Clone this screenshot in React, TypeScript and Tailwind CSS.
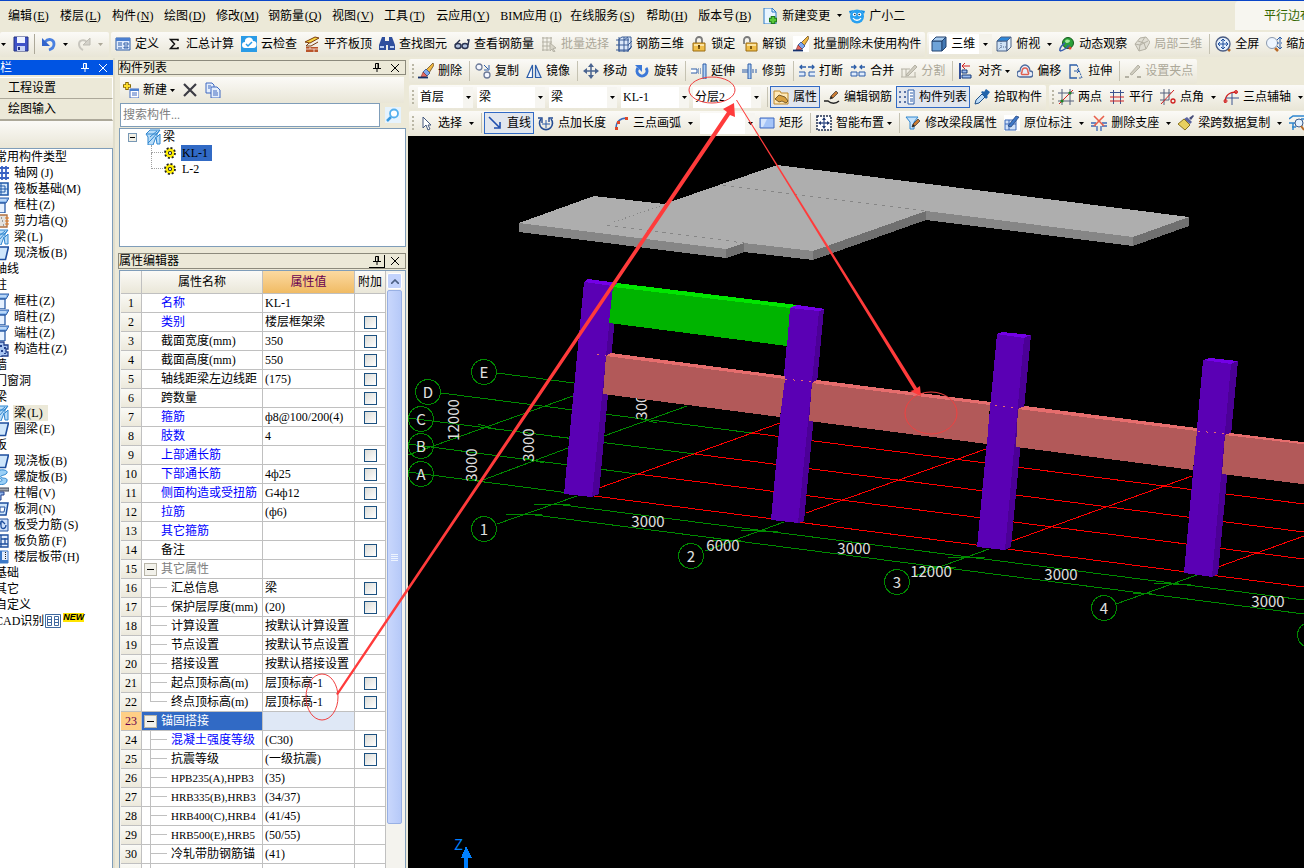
import React, { ReactNode } from "react";

const CHROME_FONT = "font-['Liberation_Serif','Noto_Sans_CJK_SC',sans-serif]";
const STRIP = "flex h-[25px] shrink-0 items-center rounded-[2px] bg-gradient-to-b from-[#fbfaf7] to-[#e9e6d7]";

const B = "#2c5da8";
const R = "#d02020";
const G = "#b4b1a4";

const pencil = (x: number, y: number, c = "#c87a32") => (
  <g>
    <path d={`M${x} ${y + 8}l1-3 5-5 2 2-5 5z`} fill={c} stroke="#333" strokeWidth=".7" />
    <path d={`M${x} ${y + 8}l1-3 2 2z`} fill="#222" />
  </g>
);

const brush = (
  <g>
    <path d="M15 0L8 7l3 3 5-8z" fill="#f0b840" stroke="#5a3c14" strokeWidth=".7" />
    <path d="M8 6l4 4-3 3-4-4z" fill="#7fa8ee" stroke="#1f3f80" strokeWidth=".7" />
    <path d="M5 9l4 4-2 1H3z" fill="#e86a60" stroke="#702020" strokeWidth=".5" />
    <path d="M0 14.500h10" stroke="#16306a" strokeWidth="1.800" />
  </g>
);

const columnShape = (
  <g>
    <path d="M0 1h16l-3 5H0z" fill="#8ebcf0" stroke={B} />
    <path d="M0 6h12v10H0z" fill="#e6f1ff" stroke={B} strokeWidth="1.300" />
    <path d="M0 3h13" stroke="#e6f1ff" />
  </g>
);
const beamShape = (
  <g>
    <path d="M1 5l4-4h10l-3 4v3l3-3v10h-3l-1-7-3 8H3V8z" fill="#b8dcf8" stroke="#2f86cf" />
    <path d="M2 5h10M5 8l7-6M6 11l8-9M3 14l3-3" stroke="#2f86cf" fill="none" />
  </g>
);

const ICONS: Record<string, ReactNode> = {
  save: (
    <g>
      <path d="M1 1h14v14H1z" fill="#3f52c8" stroke="#22307e" />
      <path d="M4 1h8v6H4z" fill="#eef2ff" />
      <path d="M4 10h8v5H4z" fill="#c9d3f5" />
      <path d="M5 11h2v3H5z" fill="#22307e" />
    </g>
  ),
  undo: (
    <g>
      <path d="M4 6c3-4 9-3 9 2 0 3-2 5-5 6" stroke="#4a80e0" strokeWidth="2.800" fill="none" />
      <path d="M1 2v8h8z" fill="#3264cc" />
    </g>
  ),
  redo: (
    <g>
      <path d="M11 6C8 3 3 4 3 8c0 3 2 5 4 6" stroke="#c8c6be" strokeWidth="2" fill="none" />
      <path d="M14 2v7H7z" fill="#d4d2ca" stroke="#bdbbb2" />
    </g>
  ),
  define: (
    <g>
      <path d="M1 2h14v12H1z" fill="#dfeafc" stroke={B} />
      <path d="M1 2h14v3H1z" fill="#4b7fd0" />
      <path d="M3 7h4M3 9h4M3 12h4" stroke={B} />
      <path d="M9 7h4v2H9zM9 11h4v1H9z" fill="#fff" stroke={B} />
    </g>
  ),
  sigma: <path d="M12 5V3.500H4.500L8.500 8l-4 4.500H12V11" stroke="#111" strokeWidth="1.500" fill="none" />,
  cloudCheck: (
    <g>
      <path d="M0 0h16v16H0z" fill="#2a9be6" />
      <path d="M4 12a3 3 0 010-6 4 4 0 018-1 3.500 3.500 0 010 7z" fill="#fff" />
      <path d="M5 8l2 2 4-4" stroke="#2a9be6" strokeWidth="1.500" fill="none" />
    </g>
  ),
  slabTop: (
    <g>
      <path d="M1 6l10-5 4 1-9 5z" fill="#f6d23c" stroke="#7a3b10" />
      <path d="M5 7l-3 3h5l7-4" stroke="#7a3b10" fill="none" />
      <path d="M2 11h12v5H2z" fill="#b9542a" />
      <path d="M2 13h12M6 11v2M10 13v3" stroke="#fff" strokeWidth=".7" />
    </g>
  ),
  binoculars: (
    <g fill="#2f4f9e">
      <path d="M3 1h3v4l1 1v8H0V9zM13 1h-3v4L9 6v8h7V9z" />
      <path d="M6 5h4v4H6z" />
      <path d="M1 10h4v2H1zM11 10h4v2h-4z" fill="#b9cdf4" />
    </g>
  ),
  glasses: (
    <g fill="none" stroke="#2a3350" strokeWidth="1.400">
      <ellipse cx="4" cy="10" rx="3" ry="2.500" fill="#b4c4e0" />
      <ellipse cx="11" cy="10" rx="3" ry="2.500" fill="#b4c4e0" />
      <path d="M1 9l5-5M14 9l1-5h-2" />
    </g>
  ),
  batchSelect: (
    <g stroke={G} fill="none">
      <path d="M1 2h10M1 6h10M1 10h8M1 14h7M2 1v14M6 1v14M10 1v7" />
      <path d="M9 7l6 5-3 .5 2 3-1.500.5-1.500-3-2 2z" fill="#d8d5c8" />
    </g>
  ),
  rebar3d: (
    <g stroke="#3a5c96" fill="none">
      <path d="M3 3l3-2h9v11l-3 3H3z" fill="#dbe8fa" />
      <path d="M0 4h13M0 9h13M0 14h13M3 1v15M8 1v15M12 2v14M12 9l4-4M12 14l4-4M8 4l4-3" />
    </g>
  ),
  lock: (
    <g>
      <path d="M5 7V4a3 3 0 016 0v3" stroke="#7b7b7b" strokeWidth="1.800" fill="none" />
      <path d="M2 7h12v8H2z" fill="#f0bf4a" stroke="#9a6a10" />
      <path d="M3 8h10v2H3z" fill="#fbe3a0" />
      <path d="M8 9v4M7 10h2" stroke="#5a3a00" strokeWidth="1.500" />
    </g>
  ),
  unlock: (
    <g>
      <path d="M2 8V4a3 3 0 016 0v2" stroke="#7b7b7b" strokeWidth="1.800" fill="none" />
      <path d="M4 7h11v8H4z" fill="#f0bf4a" stroke="#9a6a10" />
      <path d="M5 8h9v2H5z" fill="#fbe3a0" />
      <path d="M9 10v3" stroke="#5a3a00" strokeWidth="1.500" />
    </g>
  ),
  brush,
  brushWhite: (
    <g>
      <path d="M0 0h16v16H0z" fill="#fff" />
      {brush}
    </g>
  ),
  cube: (
    <g stroke="#23436e">
      <path d="M1 5h10v10H1z" fill="#6ea3d8" />
      <path d="M1 5l4-4h10l-4 4z" fill="#a9cdf0" />
      <path d="M11 5l4-4v10l-4 4z" fill="#4278b4" />
    </g>
  ),
  cubeTop: (
    <g stroke="#4a6288">
      <path d="M1 5h10v10H1z" fill="#cfe2f6" />
      <path d="M1 5l4-4h10l-4 4z" fill="#2f87d8" />
      <path d="M11 5l4-4v10l-4 4z" fill="#e8f2fc" />
      <path d="M5 5v6l-4 4M5 11h6" fill="none" strokeDasharray="1 1" />
    </g>
  ),
  orbit: (
    <g>
      <circle cx="9" cy="7" r="5.500" fill="#2aa038" stroke="#125a1c" />
      <path d="M6 5c2-3 5-1 5 0S7 9 6 5z" fill="#a5e8a0" />
      <path d="M1 15C0 12 4 8 6 7M1 15c3 0 8-4 9-6" fill="none" stroke="#3b5fae" strokeWidth="1.500" />
      <circle cx="11" cy="12" r="1.500" fill="#e04030" />
    </g>
  ),
  localCube: (
    <g stroke={G} fill="#e0ded4">
      <path d="M1 8l5-6 6-1 4 5-4 7-7 2z" />
      <path d="M1 8l5 1 5-8M6 9l-1 6M6 9l8-4M4 5l6 2 2 6" fill="none" />
    </g>
  ),
  fullScreen: (
    <g>
      <path d="M12 12l3 3" stroke="#b86a28" strokeWidth="2.500" />
      <circle cx="8" cy="8" r="7" fill="#e4effc" stroke="#4a5c84" strokeWidth="1.300" />
      <path d="M8 3v10M3 8h10M6 5l2-2 2 2M6 11l2 2 2-2M5 6L3 8l2 2M11 6l2 2-2 2" stroke="#1f4f9e" fill="none" />
    </g>
  ),
  zoomIcon: (
    <g>
      <path d="M9 12l3 3" stroke="#b86a28" strokeWidth="2.500" />
      <circle cx="6" cy="7" r="5.500" fill="#edf5ff" stroke="#8b99ae" />
      <path d="M11 4l3-3 2 2M11 10l3 3 2-2M14 1v5M14 8v5M11 7h5" stroke={B} fill="none" />
    </g>
  ),
  newChange: (
    <g>
      <path d="M2 0h8l4 4v12H2z" fill="#e8f5ff" stroke="#2a7ac8" />
      <path d="M10 0v4h4" fill="none" stroke="#2a7ac8" />
      <path d="M11 8v8M7 12h8" stroke="#1e7a1e" strokeWidth="4.500" />
      <path d="M11 9v6M8 12h6" stroke="#58c83a" strokeWidth="2.500" />
    </g>
  ),
  mascot: (
    <g>
      <path d="M1 6L0 3l5-1zM15 6l1-3-5-1z" fill="#128ee6" />
      <circle cx="8" cy="8.500" r="7" fill="#28a0f0" />
      <circle cx="5.500" cy="6.500" r="1.800" fill="#fff" />
      <circle cx="10.500" cy="6.500" r="1.800" fill="#fff" />
      <circle cx="5.800" cy="6.500" r=".8" fill="#123" />
      <circle cx="10.200" cy="6.500" r=".8" fill="#123" />
      <path d="M4 10c2 3 6 3 8 0" stroke="#fff" fill="none" strokeWidth="1.300" />
    </g>
  ),
  copy: (
    <g>
      <circle cx="4" cy="4" r="3" fill="#f4f7ff" stroke="#6c7a98" strokeWidth="1.300" />
      <circle cx="12" cy="12" r="3" fill="#f4f7ff" stroke="#6c7a98" strokeWidth="1.300" />
      <path d="M9 2l4 4M14 2v5H9" stroke={B} fill="none" />
    </g>
  ),
  mirror: (
    <g stroke={B} fill="#fff" strokeWidth="1.200">
      <path d="M6.500 2v12.500H1z" />
      <path d="M9.500 2v12.500H15z" fill="#cfe0f8" />
    </g>
  ),
  move: (
    <g>
      <path d="M8 2v12M2 8h12" stroke="#4a6490" strokeWidth="1.500" />
      <path d="M5 4l3-4 3 4zM5 12l3 4 3-4zM4 5L0 8l4 3zM12 5l4 3-4 3z" fill="#4a6490" />
    </g>
  ),
  rotate: (
    <g>
      <path d="M4 5a5 5 0 108 0" stroke="#3b78d8" strokeWidth="3" fill="none" />
      <path d="M1 2h7v7z" fill="#3b78d8" />
    </g>
  ),
  extend: (
    <g>
      <path d="M0 6h6v4H0" fill="#fff" stroke={B} />
      <path d="M7 6h4M7 8h4M7 10h4" stroke={B} strokeDasharray="1 1" />
      <path d="M12 1h3v15h-3z" fill="#b0d0f4" stroke={B} />
    </g>
  ),
  trim: (
    <g>
      <path d="M0 7h6M0 9h6" stroke={B} />
      <path d="M10 7h6M10 9h6" stroke={B} strokeDasharray="2 1" />
      <path d="M6 1h3v15H6z" fill="#b0d0f4" stroke={B} />
    </g>
  ),
  breakIcon: (
    <g>
      <path d="M7 4H1M3 2L1 4l2 2M9 4h6M13 2l2 2-2 2" stroke={B} fill="none" strokeWidth="1.300" />
      <path d="M0 9h6v4H0M16 9h-6v4h6" fill="#e0ecfc" stroke={B} />
    </g>
  ),
  merge: (
    <g>
      <path d="M1 4h5M4 2l2 2-2 2M15 4h-5M12 2l-2 2 2 2" stroke={B} fill="none" strokeWidth="1.300" />
      <path d="M1 9h6v4H1zM9 9h6v4H9z" fill="#e0ecfc" stroke={B} />
    </g>
  ),
  split: (
    <g stroke={G} fill="none">
      <path d="M0 6h9M0 14h15M1 6v8M14 9v5M5 6v8" />
      <path d="M5 12l9-10 2 2-9 9z" fill="#cfccbf" />
    </g>
  ),
  align: (
    <g>
      <path d="M2 0v16" stroke="#1f3f90" strokeWidth="1.800" />
      <path d="M4 7h5v3H4zM4 12h9v3H4z" fill="#9cbcf0" stroke="#173a7a" />
      <path d="M12 3H4M7 0L4 3l3 3" stroke={R} fill="none" />
    </g>
  ),
  offset: (
    <g fill="none">
      <path d="M3 14a3 3 0 010-6c0-4 3-6 5-6s5 2 5 6a3 3 0 010 6z" stroke="#4c6a9c" fill="#e8eefa" strokeWidth="1.300" />
      <path d="M5 11.500a1.500 1.500 0 010-2.500c0-2 1-4 3-4s3 2 3 4a1.500 1.500 0 010 2.500z" stroke="#e06050" strokeWidth="1.500" />
    </g>
  ),
  stretch: (
    <g fill="none" stroke={B}>
      <path d="M9 2H2v13h7" strokeWidth="1.300" />
      <path d="M9 2l5 13h-4" strokeDasharray="2 1" />
      <path d="M6 8h5M9 6l2 2-2 2" />
    </g>
  ),
  grip: (
    <g fill="none" stroke={G}>
      <path d="M0 14h4M12 14h4" strokeWidth="2" />
      <path d="M5 11l8-9 2 2-8 8z" fill="#cfccbf" />
    </g>
  ),
  props: (
    <g>
      <path d="M1 2h6l1 2h7v11H1z" fill="#ffe9b8" stroke="#c08a2c" />
      <path d="M2 10l4-4 6 2 3 4-2 2-4-2-3 1z" fill="#d8a040" stroke="#59421a" strokeWidth=".8" />
    </g>
  ),
  editRebar: (
    <g>
      <path d="M0 12h4c3 3 8 3 11 0" stroke="#222" fill="none" strokeWidth="1.400" />
      {pencil(6, 2)}
    </g>
  ),
  compList: (
    <g>
      <path d="M0 3h3M5 3h3M0 8h3M5 8h3M0 13h3M5 13h3" stroke="#2f4f90" strokeWidth="1.600" strokeDasharray="2 1" />
      <path d="M9 1h6v14H9z" fill="#fff" stroke={B} />
      <path d="M11 4h3M11 7h3M11 10h3M11 12h3" stroke={B} />
    </g>
  ),
  picker: (
    <g>
      <path d="M1 15l1-4 6-6 3 3-6 6z" fill="#bcdcf8" stroke="#1f4f88" />
      <path d="M7 3l2-1 1 1 2-3 4 3-3 4 1 1-2 2z" fill="#2064ac" />
    </g>
  ),
  twoPoints: (
    <g>
      <path d="M0 4h16M0 12h16M4 0v16M12 0v16" stroke="#54607c" />
      <path d="M1 15L15 1" stroke={R} />
      <circle cx="4" cy="12" r="1.600" fill="#208020" />
      <circle cx="12" cy="4" r="1.600" fill="#208020" />
    </g>
  ),
  parallel: (
    <g>
      <path d="M4.500 1v14M11.500 1v14M1 3.500h14" stroke="#3c5490" />
      <path d="M1 8h14M1 12h14" stroke={R} />
    </g>
  ),
  pointAngle: (
    <g>
      <path d="M0 4h11M0 11h9M4 0v16M9 0v11" stroke="#54607c" />
      <path d="M1 15L14 1" stroke={R} />
      <circle cx="13" cy="12" r="2" fill="none" stroke={R} strokeWidth="1.300" />
    </g>
  ),
  threeAxis: (
    <g fill="none">
      <path d="M2 14C2 6 6 3 14 3" stroke={R} strokeWidth="1.300" />
      <path d="M3 9h13M9 4v12" stroke="#3c5490" />
      <circle cx="2.500" cy="12" r="1.500" stroke={R} />
      <circle cx="13" cy="3" r="1.500" stroke={R} />
    </g>
  ),
  cursor: <path d="M5 2v11l3-3 2 5 2-1-2-4h3z" fill="#fff" stroke="#44597e" />,
  line: <path d="M2 2l10 10M13 7v6H7" stroke="#1f4fae" strokeWidth="1.600" fill="none" />,
  pointLen: (
    <g fill="none">
      <path d="M3 4a6.500 6.500 0 1010 0" stroke="#244c94" strokeWidth="1.600" />
      <path d="M0 3h4v5M15 3h-4v4" stroke="#244c94" strokeWidth="1.400" />
      <path d="M8 5v8M4 9h8" stroke={B} />
    </g>
  ),
  arc3: (
    <g>
      <path d="M3 14C3 7 7 3 14 3" stroke="#3a68b8" fill="none" strokeWidth="1.500" />
      <path d="M2 12h3v3H2zM4 6h3v3H4zM12 2h3v3h-3z" fill="#e04828" />
    </g>
  ),
  rect: (
    <g>
      <path d="M1 3h14v10H1z" fill="#a4c4f8" stroke="#3f69c0" />
      <path d="M2 4h6L4 12H2z" fill="#d4e4fc" />
    </g>
  ),
  smart: (
    <g>
      <path d="M1 1h14v14H1z" fill="#fff" stroke="#1f2f50" strokeDasharray="2 1" strokeWidth="1.500" />
      <path d="M8 3v10M3 8h10" stroke="#3f5890" strokeWidth="1.300" />
      <path d="M6 5l2-3 2 3zM6 11l2 3 2-3zM5 6L2 8l3 2zM11 6l3 2-3 2z" fill="#1f3870" />
    </g>
  ),
  editSeg: (
    <g>
      <path d="M1 2h12l-4 5v7H5V7z" fill="#c4e2fb" stroke="#2f86cf" />
      {pencil(7, 4)}
    </g>
  ),
  inPlace: (
    <g>
      <path d="M0 0h16v16H0z" fill="#fff" />
      <path d="M1 5h11v10H1zM1 9h11M5 5v10" fill="#cfe0f8" stroke="#3a68b8" />
      <path d="M4 11l8-10 3 1-8 10z" fill="#3f78c8" stroke="#1c3c70" strokeWidth=".7" />
    </g>
  ),
  delSupport: (
    <g>
      <path d="M0 8h5M11 8h5M0 11h5M11 11h5M6 11v5M10 11v5" stroke="#3a68b8" strokeWidth="1.300" />
      <path d="M3 1l10 10M13 1L3 11" stroke="#e8604c" strokeWidth="1.600" />
    </g>
  ),
  copyBrush: (
    <g>
      <path d="M15 0l-4 3 2 2 3-4z" fill="#444c78" />
      <path d="M9 2l5 5-2 2-6-5z" fill="#5a64a0" />
      <path d="M6 4l6 6-5 5-7-6z" fill="#e8d060" stroke="#8a7420" />
    </g>
  ),
  beamFind: (
    <g>
      <path d="M0 4l4-3h11M0 8h6M3 12h4M12 4h4M4 8v7" stroke="#2f86cf" fill="none" strokeWidth="1.500" />
      <circle cx="10" cy="8" r="4" fill="#e4f2ff" stroke="#3c5c8c" />
      <path d="M12 11l3 4" stroke="#b86a28" strokeWidth="2" />
    </g>
  ),
  addNew: (
    <g>
      <path d="M4 0v8M0 4h8" stroke="#8a6a00" strokeWidth="3.500" />
      <path d="M4 1v6M1 4h6" stroke="#ffe030" strokeWidth="1.800" />
      <path d="M7 7h9v9H7z" fill="#fff" stroke="#3f69c0" />
      <path d="M7 7h9v2H7z" fill="#4b7fd0" />
      <path d="M9 11h5M9 13h5" stroke="#3f69c0" />
    </g>
  ),
  closeBig: <path d="M2 2l12 12M14 2L2 14" stroke="#3c3c44" strokeWidth="2.200" />,
  pages: (
    <g stroke="#3f69c0">
      <path d="M1 1h6l2 2v8H1z" fill="#e4eefc" />
      <path d="M6 5h6l3 3v8H6z" fill="#e4eefc" />
      <path d="M8 9h4M8 11h5M8 13h5M3 4h3M3 6h2" />
    </g>
  ),
  search: (
    <g>
      <path d="M0 0h16v16H0z" fill="#e6f3fd" />
      <path d="M6 10l-4 4" stroke="#3a9ae0" strokeWidth="2.500" />
      <circle cx="9" cy="6.500" r="4" fill="#fff" stroke="#55b0ee" strokeWidth="1.800" />
    </g>
  ),
  beam: beamShape,
  gear: (
    <g>
      <circle cx="8" cy="8" r="5.500" fill="#ffee00" stroke="#222" strokeWidth="2.500" strokeDasharray="2.200 2.100" />
      <circle cx="8" cy="8" r="4.500" fill="#ffee00" />
      <circle cx="8" cy="8" r="1.800" fill="#fff" stroke="#222" strokeWidth="1.200" />
    </g>
  ),
  axisGrid: <path d="M0 3h16M0 8h16M0 13h16M4 1v14M9 1v14M13 1v14" stroke="#3a63c4" strokeWidth="1.800" />,
  raft: (
    <g fill="none" stroke="#1f58a8">
      <path d="M0 2h15v12H0z" fill="#d4e8fb" strokeWidth="1.600" />
      <path d="M4 5h8v6H4zM8 2v12M0 8h15" />
    </g>
  ),
  column: columnShape,
  wall: (
    <g>
      <path d="M0 2h14v12H0z" fill="#e4e2de" stroke="#b07040" strokeWidth="1.400" />
      <path d="M12 5h4M12 8h4M12 11h4" stroke="#e07820" strokeWidth="1.200" />
      <path d="M8 5h1M9 8h1M6 11h1M10 12h1" stroke="#555" />
    </g>
  ),
  slab: <path d="M0 2h15.500l-3 12.500H0z" fill="#cfe6fb" stroke="#1f4f9e" strokeWidth="1.600" />,
  builtCol: (
    <g>
      <path d="M3 1h8v3h4v4h-2v3h2v4H9v1H3z" fill="#a8c4f0" stroke="#22408c" strokeWidth="1.300" />
      <path d="M7 4h2v2H7zM11 6h2v2h-2zM8 9h2v2H8zM11 12h2v1h-2z" fill="#22408c" />
    </g>
  ),
  spiral: <path d="M7 1c6-1 9 2 6 4s-6 1-5 3 7 0 6 4-6 4-10 3l1-3c4 1 5-1 3-2s-5-3-3-6z" fill="#9cd0f6" stroke="#2f86cf" />,
  colCap: (
    <g>
      <path d="M0 3h16v3H0z" fill="#a4a8b0" stroke="#3c4454" />
      <path d="M0 7h11v3H8v5H4v-5H0z" fill="#8fb4ea" stroke="#22408c" />
    </g>
  ),
  hole: (
    <g fill="none">
      <path d="M0 2h15l-2 12H0z" fill="#cfe6fb" stroke="#1f4f9e" strokeWidth="1.500" />
      <path d="M7 6h5l-1 5H7z" stroke="#1f4f9e" fill="#fff" />
    </g>
  ),
  slabRebar: (
    <g fill="none" stroke="#1f4f9e">
      <path d="M0 2h15v12H0z" fill="#cfe0fb" />
      <path d="M8 4v5c0 4 5 3 5-1M6 8l3-4 3 3" strokeWidth="1.300" />
    </g>
  ),
  negRebar: (
    <g fill="none" stroke="#1f4f9e">
      <path d="M0 2h15v12H0zM8 2v12M12 5v6M8 6h7M0 11h15" fill="#e4eefc" strokeWidth="1.300" />
    </g>
  ),
  band: (
    <g>
      <path d="M0 2h15v12H0z" fill="#e4eefc" stroke="#3a78c8" />
      <path d="M0 11h15v3H0z" fill="#3a78c8" />
      <path d="M7 2v10h2V2z" fill="#3a78c8" />
      <path d="M12.500 3v8" stroke="#222" strokeDasharray="1 1" />
    </g>
  ),
};

function Icon({ name, className = "size-4" }: { name: string; className?: string }) {
  return (
    <svg viewBox="0 0 16 16" className={`shrink-0 ${className}`} aria-hidden="true">
      {ICONS[name]}
    </svg>
  );
}

function Caret({ dim = false }: { dim?: boolean }) {
  return (
    <svg viewBox="0 0 5 3" className="h-[3px] w-[5px] shrink-0" aria-hidden="true">
      <path d="M0 0h5L2.500 3z" fill={dim ? "#aca899" : "#000"} />
    </svg>
  );
}

const Sep = () => <span className="mr-[5px] h-5 w-px shrink-0 bg-[#c5c2b2]" />;

const Grip = () => (
  <span className="mr-1 ml-[3px] flex shrink-0 flex-col gap-[2px]">
    {[0, 1, 2, 3].map((i) => (
      <span key={i} className="size-[2px] bg-[#bab7a6]" />
    ))}
  </span>
);

type ToolProps = { icon: string; label?: string; drop?: "split" | "tight"; off?: boolean; on?: boolean };

function Tool({ icon, label, drop, off, on }: ToolProps) {
  return (
    <button
      type="button"
      disabled={off}
      aria-label={label ?? icon}
      className={`flex shrink-0 items-center whitespace-nowrap last:mr-1 ${off ? "text-[#aca899]" : "text-black"} ${
        on ? "mr-1 -ml-[3px] h-[22px] border border-[#316ac5] bg-[#e1e6ee] px-[2px]" : "mr-[7px] h-[22px]"
      }`}
    >
      <Icon name={icon} className="mr-1 size-4" />
      {label}
      {drop && (
        <span className={`flex justify-end ${drop === "split" ? "w-3" : "w-2"}`}>
          <Caret />
        </span>
      )}
    </button>
  );
}

function Combo({ value, label, width = "w-[68px]" }: { value: string; label: string; width?: string }) {
  return (
    <div className={`mr-1 flex h-[21px] shrink-0 items-center bg-[#f6f5f0] ${width}`}>
      <select aria-label={label} className="h-full min-w-0 flex-1 appearance-none bg-white pl-[2px] text-black outline-none">
        <option>{value}</option>
      </select>
      <span className="flex w-[10px] justify-center">
        <Caret />
      </span>
    </div>
  );
}

const MENUS: [string, string][] = [
  ["编辑", "E"],
  ["楼层", "L"],
  ["构件", "N"],
  ["绘图", "D"],
  ["修改", "M"],
  ["钢筋量", "Q"],
  ["视图", "V"],
  ["工具", "T"],
  ["云应用", "Y"],
  ["BIM应用", "I"],
  ["在线服务", "S"],
  ["帮助", "H"],
  ["版本号", "B"],
];

function MenuBar() {
  return (
    <nav className="flex h-[30px] shrink-0 items-center overflow-hidden border-t border-[#0a46c8] pl-2">
      {MENUS.map(([t, k]) => (
        <button type="button" key={k} className={`mr-[10px] flex shrink-0 whitespace-nowrap ${k === "I" ? "w-[60px]" : ""}`}>
          {t}
          <span className="w-[18px] shrink-0 text-center">
            (<u>{k}</u>)
          </span>
        </button>
      ))}
      <Tool icon="newChange" label="新建变更" drop="split" />
      <Tool icon="mascot" label="广小二" />
      <button type="button" className="ml-auto h-full w-[69px] shrink-0 overflow-hidden rounded-tl bg-[#f7f6f0] pl-[29px] text-left whitespace-nowrap text-[#336600]">
        平行边布
      </button>
    </nav>
  );
}

function MainToolbar() {
  return (
    <div className="flex h-[28px] shrink-0 items-center gap-[2px] overflow-hidden">
      <div className={`${STRIP} w-[109px]`}>
        <span className="mr-[7px] ml-px">
          <Caret />
        </span>
        <button type="button" aria-label="保存">
          <Icon name="save" />
        </button>
        <span className="mr-[6px] ml-[5px] h-5 w-px bg-[#aca899]" />
        <button type="button" aria-label="撤销" className="flex items-center gap-[6px]">
          <Icon name="undo" />
          <Caret />
        </button>
        <button type="button" aria-label="恢复" disabled className="ml-2 flex items-center gap-[6px]">
          <Icon name="redo" />
          <Caret dim />
        </button>
      </div>
      <div className={`${STRIP} pl-1`}>
        <Tool icon="define" label="定义" />
        <Tool icon="sigma" label="汇总计算" />
        <Tool icon="cloudCheck" label="云检查" />
        <Tool icon="slabTop" label="平齐板顶" />
        <Tool icon="binoculars" label="查找图元" />
        <Tool icon="glasses" label="查看钢筋量" />
        <Tool icon="batchSelect" label="批量选择" off />
        <Tool icon="rebar3d" label="钢筋三维" />
        <Tool icon="lock" label="锁定" />
        <Tool icon="unlock" label="解锁" />
        <Tool icon="brushWhite" label="批量删除未使用构件" />
      </div>
      <div className={`${STRIP} flex-1 pl-[2px]`}>
        <button type="button" className="mr-1 flex h-5 shrink-0 items-center bg-white pl-[2px] whitespace-nowrap">
          <Icon name="cube" className="mr-1 size-4" />
          三维
          <span className="ml-1 flex h-full w-[13px] items-center justify-center bg-[#f4f2ea]">
            <Caret />
          </span>
        </button>
        <Tool icon="cubeTop" label="俯视" drop="split" />
        <Tool icon="orbit" label="动态观察" />
        <Tool icon="localCube" label="局部三维" off />
        <Sep />
        <Tool icon="fullScreen" label="全屏" />
        <Tool icon="zoomIcon" label="缩放" />
      </div>
    </div>
  );
}

function DrawToolbars() {
  return (
    <div className="shrink-0 overflow-hidden pl-px">
      <div className="flex h-[26px] items-center">
        <div className={STRIP}>
          <Grip />
          <Tool icon="brush" label="删除" />
          <Sep />
          <Tool icon="copy" label="复制" />
          <Tool icon="mirror" label="镜像" />
          <Sep />
          <Tool icon="move" label="移动" />
          <Tool icon="rotate" label="旋转" />
          <Sep />
          <Tool icon="extend" label="延伸" />
          <Tool icon="trim" label="修剪" />
          <Sep />
          <Tool icon="breakIcon" label="打断" />
          <Tool icon="merge" label="合并" />
          <Tool icon="split" label="分割" off />
          <Sep />
          <Tool icon="align" label="对齐" drop="tight" />
          <Tool icon="offset" label="偏移" />
          <Tool icon="stretch" label="拉伸" />
          <Sep />
          <Tool icon="grip" label="设置夹点" off />
        </div>
      </div>
      <div className="flex h-[26px] items-center gap-[3px]">
        <div className={STRIP}>
          <Grip />
          <Combo value="首层" label="楼层" width="w-[55px]" />
          <Combo value="梁" label="构件类型" />
          <Combo value="梁" label="构件子类型" />
          <Combo value="KL-1" label="构件" />
          <Combo value="分层2" label="分层" />
          <span className="w-[2px]" />
          <Sep />
          <Tool icon="props" label="属性" on />
          <Tool icon="editRebar" label="编辑钢筋" />
          <Tool icon="compList" label="构件列表" on />
          <Tool icon="picker" label="拾取构件" />
        </div>
        <div className={`${STRIP} flex-1`}>
          <Grip />
          <Tool icon="twoPoints" label="两点" />
          <Tool icon="parallel" label="平行" />
          <Tool icon="pointAngle" label="点角" drop="split" />
          <Tool icon="threeAxis" label="三点辅轴" drop="split" />
        </div>
      </div>
      <div className="flex h-[26px] items-center">
        <div className={`${STRIP} flex-1`}>
          <Grip />
          <Tool icon="cursor" label="选择" drop="split" />
          <Sep />
          <Tool icon="line" label="直线" on />
          <Tool icon="pointLen" label="点加长度" />
          <Tool icon="arc3" label="三点画弧" drop="split" />
          <Combo value="" label="画弧方式" width="w-[55px]" />
          <Tool icon="rect" label="矩形" />
          <Sep />
          <Tool icon="smart" label="智能布置" drop="tight" />
          <Sep />
          <Tool icon="editSeg" label="修改梁段属性" />
          <Tool icon="inPlace" label="原位标注" drop="split" />
          <Tool icon="delSupport" label="删除支座" drop="split" />
          <Tool icon="copyBrush" label="梁跨数据复制" drop="split" />
          <Tool icon="beamFind" />
        </div>
      </div>
    </div>
  );
}

function PinClose({ light = false, raised = false }: { light?: boolean; raised?: boolean }) {
  const c = light ? "#fff" : "#000";
  return (
    <span className="ml-auto flex items-center gap-1 pr-1">
      <button type="button" aria-label="固定" className={`flex h-[13px] w-4 items-center justify-center ${raised ? "border-r border-b border-black" : ""}`}>
        <svg viewBox="0 0 8 9" className="h-[9px] w-2" fill="none" stroke={c}>
          <path d="M2.500 5V.5h3V5M5 0v5M0 5.500h8M4 6v3" />
        </svg>
      </button>
      <button type="button" aria-label="关闭" className="flex size-3 items-center justify-center">
        <svg viewBox="0 0 8 8" className="size-2" stroke={c}>
          <path d="M0 0l8 8M8 0L0 8" />
        </svg>
      </button>
    </span>
  );
}

type Nav = { t: string; k?: string; icon?: string; on?: boolean; tag?: boolean };
const NAV: Nav[] = [
  { t: "常用构件类型" },
  { t: "轴网", k: "J", icon: "axisGrid" },
  { t: "筏板基础", k: "M", icon: "raft" },
  { t: "框柱", k: "Z", icon: "column" },
  { t: "剪力墙", k: "Q", icon: "wall" },
  { t: "梁", k: "L", icon: "beam" },
  { t: "现浇板", k: "B", icon: "slab" },
  { t: "轴线" },
  { t: "柱" },
  { t: "框柱", k: "Z", icon: "column" },
  { t: "暗柱", k: "Z", icon: "column" },
  { t: "端柱", k: "Z", icon: "column" },
  { t: "构造柱", k: "Z", icon: "builtCol" },
  { t: "墙" },
  { t: "门窗洞" },
  { t: "梁" },
  { t: "梁", k: "L", icon: "beam", on: true },
  { t: "圈梁", k: "E", icon: "slab" },
  { t: "板" },
  { t: "现浇板", k: "B", icon: "slab" },
  { t: "螺旋板", k: "B", icon: "spiral" },
  { t: "柱帽", k: "V", icon: "colCap" },
  { t: "板洞", k: "N", icon: "hole" },
  { t: "板受力筋", k: "S", icon: "slabRebar" },
  { t: "板负筋", k: "F", icon: "negRebar" },
  { t: "楼层板带", k: "H", icon: "band" },
  { t: "基础" },
  { t: "其它" },
  { t: "自定义" },
  { t: "CAD识别", tag: true },
];

function Sidebar() {
  return (
    <aside className="flex w-[115px] shrink-0 flex-col overflow-hidden border-r-2 border-[#e0ddcc]">
      <header className="mt-[2px] flex h-[15px] shrink-0 items-center bg-[#0054e3] text-white">
        栏<PinClose light />
      </header>
      <button type="button" className="mt-[2px] h-[22px] shrink-0 border-t border-r border-b border-white border-b-[#aca899] pl-2 text-left">
        工程设置
      </button>
      <button type="button" className="h-[22px] shrink-0 border-r border-b-2 border-white border-b-[#aca899] pl-2 text-left">
        绘图输入
      </button>
      <div className="h-[27px] shrink-0 bg-gradient-to-b from-[#fbfaf7] to-[#e9e6d7]" />
      <ul className="min-h-0 flex-1 overflow-hidden border-t border-r border-[#7f9db9] bg-white">
        {NAV.map((n, i) => (
          <li key={i} className="h-4">
            <button type="button" className="flex h-4 items-center whitespace-nowrap">
              {n.icon ? <Icon name={n.icon} className="mr-1 -ml-[7px] size-4" /> : <span className="-ml-[6px]" />}
              <span className={`flex h-4 items-center px-px ${n.on ? "bg-[#ece9d8] pr-1" : ""}`}>
                {n.t}
                {n.k && <span className="w-[18px] text-center">({n.k})</span>}
              </span>
              {n.tag && (
                <>
                  <svg viewBox="0 0 16 16" className="mr-[2px] size-4" fill="#fff" stroke="#3f69a0">
                    <path d="M.5 1.500h15v13H.5zM2.500 3.500h4v9h-4zM9.500 3.500h4v9h-4zM2.500 6.500h4M2.500 9.500h4M9.500 6.500h4M9.500 9.500h4" />
                  </svg>
                  <b className="self-start bg-[#ffe400] font-['Liberation_Sans',sans-serif] text-[9px] leading-[9px] italic">NEW</b>
                </>
              )}
            </button>
          </li>
        ))}
      </ul>
    </aside>
  );
}

function ComponentList() {
  return (
    <section className="shrink-0">
      <header className="mt-[2px] flex h-[15px] items-center border border-[#8c8a7c]">
        构件列表
        <PinClose />
      </header>
      <div className="mx-[2px] mt-[2px] flex h-[26px] items-center bg-gradient-to-b from-[#fbfaf7] to-[#e9e6d7] pl-[3px]">
        <Tool icon="addNew" label="新建" drop="tight" />
        <button type="button" aria-label="删除构件" className="mr-[7px]">
          <Icon name="closeBig" />
        </button>
        <button type="button" aria-label="复制构件">
          <Icon name="pages" />
        </button>
      </div>
      <div className="flex h-[24px] items-center pl-[2px]">
        <input aria-label="搜索构件" placeholder="搜索构件..." className="h-[24px] w-0 flex-1 border border-[#7f9db9] bg-white pl-[2px] outline-none placeholder:text-[#808080]" />
        <button type="button" aria-label="搜索" className="mx-[5px]">
          <Icon name="search" />
        </button>
      </div>
      <div className="mt-px ml-px h-[119px] border border-[#7f9db9] bg-white pl-2">
        <div className="flex h-4 items-center">
          <button type="button" aria-label="折叠" className="mr-2 flex size-[9px] items-center justify-center border border-[#7898b5] bg-[#f0eee4]">
            <span className="h-px w-[5px] bg-black" />
          </button>
          <Icon name="beam" className="mr-[2px] size-4" />
          <span>梁</span>
        </div>
        <ul className="ml-[23px]">
          {["KL-1", "L-2"].map((n, i) => (
            <li key={n} className="relative flex h-4 items-center pl-3">
              <span className={`absolute left-0 w-3 border-b border-l border-dotted border-[#a0a0a0] ${i ? "-top-2 h-4" : "top-0 h-2"}`} />
              <Icon name="gear" className="mr-1 size-[14px]" />
              <button type="button" className={`h-4 px-[1px] text-left leading-4 ${i ? "" : "w-[31px] bg-[#316ac5]"}`}>
                {n}
              </button>
            </li>
          ))}
        </ul>
      </div>
    </section>
  );
}

type Prop = { n: string; v?: string; c?: boolean; s?: "blue" | "group" | "sel"; d?: boolean; end?: boolean; small?: boolean };
const PROPS: Prop[] = [
  { n: "名称", v: "KL-1", s: "blue" },
  { n: "类别", v: "楼层框架梁", c: true, s: "blue" },
  { n: "截面宽度(mm)", v: "350", c: true },
  { n: "截面高度(mm)", v: "550", c: true },
  { n: "轴线距梁左边线距", v: "(175)", c: true },
  { n: "跨数量", c: true },
  { n: "箍筋", v: "ф8@100/200(4)", c: true, s: "blue" },
  { n: "肢数", v: "4", s: "blue" },
  { n: "上部通长筋", c: true, s: "blue" },
  { n: "下部通长筋", v: "4ф25", c: true, s: "blue" },
  { n: "侧面构造或受扭筋", v: "G4ф12", c: true, s: "blue" },
  { n: "拉筋", v: "(ф6)", c: true, s: "blue" },
  { n: "其它箍筋", s: "blue" },
  { n: "备注", c: true },
  { n: "其它属性", s: "group" },
  { n: "汇总信息", v: "梁", c: true, d: true },
  { n: "保护层厚度(mm)", v: "(20)", c: true, d: true },
  { n: "计算设置", v: "按默认计算设置", d: true },
  { n: "节点设置", v: "按默认节点设置", d: true },
  { n: "搭接设置", v: "按默认搭接设置", d: true },
  { n: "起点顶标高(m)", v: "层顶标高-1", c: true, d: true },
  { n: "终点顶标高(m)", v: "层顶标高-1", c: true, d: true, end: true },
  { n: "锚固搭接", s: "sel" },
  { n: "混凝土强度等级", v: "(C30)", c: true, s: "blue", d: true },
  { n: "抗震等级", v: "(一级抗震)", c: true, d: true },
  { n: "HPB235(A),HPB3", v: "(35)", d: true, small: true },
  { n: "HRB335(B),HRB3", v: "(34/37)", d: true, small: true },
  { n: "HRB400(C),HRB4", v: "(41/45)", d: true, small: true },
  { n: "HRB500(E),HRB5", v: "(50/55)", d: true, small: true },
  { n: "冷轧带肋钢筋锚", v: "(41)", d: true },
  { n: "", d: true },
];

const CELL = "overflow-hidden border-r border-b border-[#c0c0c0] p-0 whitespace-nowrap";

function PropertyEditor() {
  return (
    <section className="mt-[6px] flex min-h-0 flex-1 flex-col">
      <header className="flex h-[16px] shrink-0 items-center border border-[#8c8a7c]">
        属性编辑器
        <PinClose raised />
      </header>
      <div className="mt-px ml-px flex min-h-0 flex-1 overflow-hidden border border-b-0 border-[#7f9db9] bg-[#f4f3ee] pl-px">
        <div className="min-w-0 flex-1 overflow-hidden bg-white">
          <table className="w-full table-fixed border-separate border-spacing-0 leading-[18px]">
            <colgroup>
              <col className="w-[21px]" />
              <col className="w-[121px]" />
              <col className="w-[92px]" />
              <col />
            </colgroup>
            <thead>
              <tr className="h-[23px] bg-gradient-to-b from-[#fbfaf7] to-[#e9e6d7]">
                <th className={CELL} aria-label="序号" />
                <th className={`${CELL} font-normal`}>属性名称</th>
                <th className={`${CELL} bg-gradient-to-b from-[#fbd9a0] to-[#f0bb63] font-normal text-[#680050]`}>属性值</th>
                <th className={`${CELL} font-normal`}>附加</th>
              </tr>
            </thead>
            <tbody>
              {PROPS.map((p, i) => {
                const head = p.s === "group" || p.s === "sel";
                return (
                  <tr key={i} className="h-[19px]">
                    <td className={`${CELL} text-center ${p.s === "sel" ? "bg-[#ffcf86] text-[#680050]" : "bg-gradient-to-b from-[#fafaf6] to-[#ece9dc]"}`}>
                      {p.n ? i + 1 : ""}
                    </td>
                    <td className={`${CELL} ${p.s === "sel" ? "bg-[#316ac5] text-white" : p.s === "group" ? "text-[#808080]" : p.s === "blue" ? "text-[#0000ff]" : ""}`}>
                      <div className={`flex h-[18px] items-center ${p.small ? "text-[11px]" : ""}`}>
                        {head && (
                          <button type="button" aria-label="折叠分组" className="mr-1 ml-[2px] flex size-[13px] items-center justify-center border border-[#b8b5a8] bg-[#f2f1ea]">
                            <span className="h-px w-[7px] bg-black" />
                          </button>
                        )}
                        {p.d && (
                          <span className={`relative mr-1 ml-2 w-[17px] shrink-0 self-stretch ${p.end ? "" : "border-l border-[#c0c0c0]"}`}>
                            <span className={`absolute top-0 left-0 h-[9px] w-full border-b border-[#c0c0c0] ${p.end ? "border-l" : ""}`} />
                          </span>
                        )}
                        {!head && !p.d && <span className="w-[19px] shrink-0" />}
                        {p.n}
                      </div>
                    </td>
                    <td className={`${CELL} pl-[2px] ${p.s === "sel" ? "bg-[#dfe8f6]" : ""}`}>{p.v}</td>
                    <td className={CELL}>
                      {p.c && (
                        <input
                          type="checkbox"
                          aria-label={`附加 ${p.n}`}
                          className="mx-auto block size-[13px] appearance-none border border-[#1c5180] bg-gradient-to-br from-[#dcdcd7] to-white"
                        />
                      )}
                    </td>
                  </tr>
                );
              })}
            </tbody>
          </table>
        </div>
        <div className="flex w-[17px] shrink-0 flex-col items-center pt-[2px]">
          <button type="button" aria-label="向上滚动" className="flex h-4 w-[15px] shrink-0 items-center justify-center rounded-[2px] border border-white bg-[#c3d3fc]">
            <svg viewBox="0 0 8 5" className="h-[5px] w-2" fill="none" stroke="#4d6185" strokeWidth="1.600">
              <path d="M0 5l4-4 4 4" />
            </svg>
          </button>
          <div className="mt-px flex h-[534px] w-[15px] shrink-0 flex-col items-center justify-center gap-px rounded-[2px] border border-[#98b0e4] bg-gradient-to-r from-[#c9d7fc] to-[#b6c9f8]">
            {[0, 1, 2, 3].map((i) => (
              <span key={i} className="h-px w-[7px] bg-[#eef4fe]" />
            ))}
          </div>
        </div>
        <div className="w-[2px] shrink-0" />
      </div>
    </section>
  );
}

const COLUMNS: { front: string; side: string; top: string }[] = [
  { front: "584,282 613,286 592,497 564,494", side: "613,286 618,283 599,494 592,497", top: "584,282 588,279 618,283 613,286" },
  { front: "790,308 819,311 798,523 771,520", side: "819,311 824,309 804,521 798,523", top: "790,308 797,305 825,309 819,311" },
  { front: "997,334 1024,338 1005,550 977,547", side: "1024,338 1031,335 1011,547 1005,550", top: "997,334 1002,332 1031,335 1024,338" },
  { front: "1203,360 1231,364 1212,577 1184,573", side: "1231,364 1238,361 1218,574 1212,577", top: "1203,360 1210,358 1238,361 1231,364" },
];

const BEAMS: { front: string; top: string }[] = [
  { front: "606,356 785,379 780,417 603,394", top: "606,356 611,353 785,376 785,379" },
  { front: "812,383 990,405 987,444 809,421", top: "812,383 817,380 991,402 990,405" },
  { front: "1018,409 1197,431 1193,470 1016,447", top: "1018,409 1025,406 1197,428 1197,431" },
  { front: "1225,435 1310,445 1310,485 1222,474", top: "1225,435 1230,433 1310,443 1310,445" },
];

const BUBBLES: [string, number, number][] = [
  ["E", 484, 372],
  ["D", 428, 392],
  ["C", 421, 419],
  ["B", 421, 446],
  ["A", 421, 474],
  ["1", 484, 529],
  ["2", 691, 556],
  ["3", 897, 582],
  ["4", 1104, 608],
];

const DIMS: [string, number, number][] = [
  ["3000", 648, 521],
  ["6000", 723, 545],
  ["3000", 854, 548],
  ["12000", 931, 571],
  ["3000", 1061, 574],
  ["3000", 1268, 601],
];
const SIDE_DIMS: [string, number, number][] = [
  ["12000", 453, 420],
  ["3000", 471, 465],
  ["3000", 528, 445],
  ["3000", 641, 403],
];

function Viewport() {
  return (
    <main className="min-h-0 flex-1 overflow-hidden bg-black">
      <svg className="block h-full w-full" role="img" aria-label="三维视图">
        <g transform="translate(-408,-136)" shapeRendering="crispEdges">
          <g fill="#868686">
            <polygon points="519,223 726,249 726,258 519,232" />
            <polygon points="744,243 813,251 813,260 744,252" />
            <polygon points="926,211 1133,237 1133,246 926,220" />
          </g>
          <g fill="#707070">
            <polygon points="726,249 744,243 744,252 726,258" />
            <polygon points="813,251 926,211 926,220 813,260" />
            <polygon points="1133,237 1189,217 1189,226 1133,246" />
          </g>
          <polygon points="519,223 594,196 664,204 777,165 850,174 1189,217 1133,237 926,211 813,251 744,243 726,249" fill="#aeaeae" />
          <g stroke="#868686" fill="none">
            <path d="M723 185L926 211M607 225L744 243" strokeDasharray="3 5" />
            <path d="M614 222L660 206" strokeDasharray="1 3" />
          </g>

          <g stroke="#008a00" fill="none">
            <path d="M497 373L574 383M441 393L752 433M408 418L695 454M408 444L637 474M408 472L592 496" />
            <path d="M408 455L573 396M483 480L568 448M604 436L687 406" />
            <path d="M478 424L498 430M525 458L544 463M637 418L657 423M468 478L488 483" />
            <path d="M534 504H570M506 514L542 515M555 504L1304 600M527 514L1304 614" />
            <path d="M741 530L778 532M713 540L741 541M947 557L985 558M920 567H956M1154 583L1191 585M1133 593L1152 594" />
            <path d="M497 524L577 496M705 551L784 522M912 577L989 549M1116 604L1197 575" />
          </g>
          <g stroke="#ff0000" fill="none">
            <path d="M752 433L1304 504M695 454L1304 532M637 474L1304 559M594 496L1304 587" />
            <path d="M599 488L780 423M806 513L986 449M1012 541L1192 476M1218 567L1304 536" />
          </g>

          <g fill="#e0e0e0" fontSize="15" textAnchor="middle" className="font-['Noto_Sans_CJK_SC',sans-serif]">
            {BUBBLES.map(([t, x, y]) => (
              <g key={t}>
                <circle cx={x} cy={y} r="12.500" fill="none" stroke="#008a00" />
                <text x={x} y={y + 6}>
                  {t}
                </text>
              </g>
            ))}
            <circle cx="1310" cy="635" r="12.500" fill="none" stroke="#008a00" />
            {DIMS.map(([t, x, y], i) => (
              <text key={i} x={x} y={y + 6}>
                {t}
              </text>
            ))}
            {SIDE_DIMS.map(([t, x, y], i) => (
              <text key={i} transform={`translate(${x + 6},${y}) rotate(-90)`}>
                {t}
              </text>
            ))}
          </g>

          {COLUMNS.map((c) => (
            <g key={c.front}>
              <polygon points={c.side} fill="#4b0096" />
              <polygon points={c.front} fill="#5a00b4" />
              <polygon points={c.top} fill="#7300e6" />
            </g>
          ))}
          <polygon points="613,287 790,308 787,346 609,323" fill="#00b400" />
          <polygon points="613,287 617,283 797,305 790,308" fill="#00e600" />
          {BEAMS.map((b) => (
            <g key={b.front}>
              <polygon points={b.front} fill="#b25959" />
              <polygon points={b.top} fill="#e66d6d" />
            </g>
          ))}
          <path d="M597 354L606 356M785 379L812 382M995 405L1018 408M1198 431L1225 434" stroke="#e66d6d" strokeDasharray="2 6" />

          <path d="M464 868V858H461L466 846L472 858H468V868Z" fill="#0080ff" />
          <text x="454" y="850" fontSize="15" fill="#0080ff" className="font-['Noto_Sans_CJK_SC',sans-serif]">
            Z
          </text>
        </g>
      </svg>
    </main>
  );
}

function Annotations() {
  return (
    <svg className="pointer-events-none absolute inset-0 h-full w-full" aria-hidden="true">
      <g fill="#ff3b3b">
        <polygon points="336,694 338,695 730,115 735,117 734,103 723,109 727,112" />
        <polygon points="736,100 737,100 917,388 920,386 921,396 910,391 914,390" />
      </g>
      <g fill="none" stroke="#f04040">
        <ellipse cx="712" cy="90" rx="23" ry="13" />
        <ellipse cx="322" cy="697" rx="16" ry="23" />
        <ellipse cx="931" cy="413" rx="26" ry="21" />
      </g>
    </svg>
  );
}

export default function App() {
  return (
    <div className={`relative flex h-screen flex-col overflow-hidden bg-[#ece9d8] text-[12px] leading-[16px] text-black ${CHROME_FONT}`}>
      <MenuBar />
      <MainToolbar />
      <div className="flex min-h-0 flex-1">
        <Sidebar />
        <div className="mr-[2px] ml-[3px] flex w-[288px] shrink-0 flex-col">
          <ComponentList />
          <PropertyEditor />
        </div>
        <div className="flex min-w-0 flex-1 flex-col">
          <DrawToolbars />
          <Viewport />
        </div>
      </div>
      <Annotations />
    </div>
  );
}
